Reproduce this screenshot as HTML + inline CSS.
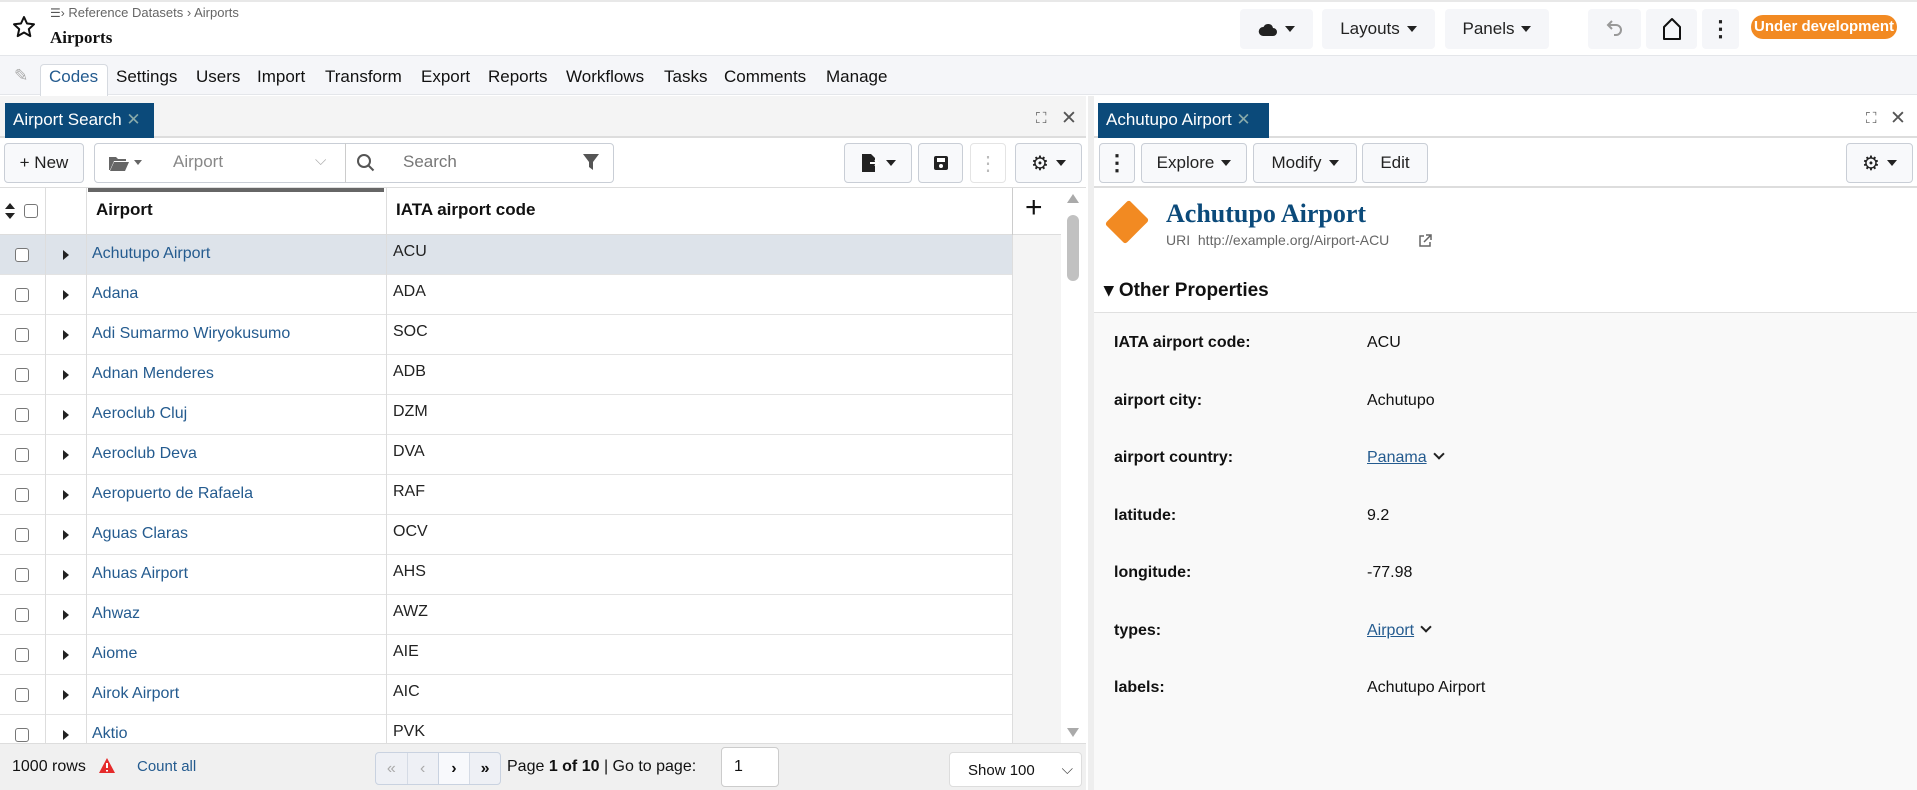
<!DOCTYPE html>
<html><head><meta charset="utf-8"><style>
*{box-sizing:border-box;margin:0;padding:0}
body{width:1917px;height:790px;overflow:hidden;background:#fff;font-family:"Liberation Sans",sans-serif;color:#111;position:relative}
.a{position:absolute}
.btn{position:absolute;background:#f5f6f9;border-radius:4px;display:flex;align-items:center;justify-content:center;font-size:17px;color:#222}
.tb{position:absolute;border:1px solid #c9ced6;border-radius:4px;background:#f8f9fb;display:flex;align-items:center;justify-content:center;font-size:17px;color:#222}
.caret{display:inline-block;width:0;height:0;border-left:5px solid transparent;border-right:5px solid transparent;border-top:6px solid #222;margin-left:7px}
.row{position:absolute;left:0;width:1061px;height:40px;border-bottom:1px solid #e3e3e3;font-size:16px}
.row .cb{position:absolute;left:15px;top:13px;width:14px;height:14px;border:1px solid #777;border-radius:3px;background:#fff}
.row .tri{position:absolute;left:63px;top:15px;width:0;height:0;border-top:5px solid transparent;border-bottom:5px solid transparent;border-left:6px solid #222}
.row .n{position:absolute;left:92px;top:10px;color:#245b8f}
.row .c{position:absolute;left:393px;top:8px;color:#222}
.row .v{position:absolute;left:45px;top:0;height:40px;border-left:1px solid #ddd}
.row .v2{position:absolute;left:86px;top:0;height:40px;border-left:1px solid #ddd}
.row .v3{position:absolute;left:386px;top:0;height:40px;border-left:1px solid #ddd}
.row .v4{position:absolute;left:1012px;top:0;height:40px;width:49px;border-left:1px solid #ddd;background:#f4f4f4}
.pl{position:absolute;left:1114px;font-size:16px;font-weight:bold;color:#111}
.pv{position:absolute;left:1367px;font-size:16px;color:#111}
.lk{color:#245b8f;text-decoration:underline}
.chev{display:inline-block;width:8px;height:8px;border-right:2px solid #222;border-bottom:2px solid #222;transform:rotate(45deg);margin-left:8px;position:relative;top:-4px}
</style></head><body>
<div class="a" style="left:0;top:0;width:1917px;height:2px;background:#e8e8e8"></div>
<svg class="a" style="left:12px;top:15px" width="24" height="24" viewBox="0 0 24 24"><path d="M12 2l3 6.5 7 .8-5.2 4.8 1.5 7-6.3-3.6-6.3 3.6 1.5-7L2 9.3l7-.8z" fill="none" stroke="#111" stroke-width="2" stroke-linejoin="round"/></svg>
<div class="a" style="left:50px;top:5px;font-size:13px;color:#666"><span style="font-size:12px;color:#555">☰›</span> Reference Datasets › Airports</div>
<div class="a" style="left:50px;top:28px;font-size:17px;font-weight:bold;font-family:'Liberation Serif',serif;color:#111">Airports</div>
<div class="btn" style="left:1240px;top:9px;width:73px;height:40px"><svg width="20" height="16" viewBox="0 0 20 16"><path d="M5 15h10a4 4 0 0 0 0-8 5 5 0 0 0-9.5-1A4.5 4.5 0 0 0 5 15z" fill="#222"/></svg><span class="caret"></span></div>
<div class="btn" style="left:1322px;top:9px;width:113px;height:40px">Layouts<span class="caret"></span></div>
<div class="btn" style="left:1445px;top:9px;width:104px;height:40px">Panels<span class="caret"></span></div>
<div class="btn" style="left:1588px;top:9px;width:53px;height:40px"><svg width="20" height="22" viewBox="0 0 20 22"><path d="M7 3L3 7l4 4M3 7h8a5 5 0 0 1 0 10H9" fill="none" stroke="#999" stroke-width="2"/></svg></div>
<div class="btn" style="left:1646px;top:9px;width:51px;height:40px"><svg width="22" height="24" viewBox="0 0 22 24"><path d="M3 22V10l8-8 8 8v12z" fill="none" stroke="#111" stroke-width="2" stroke-linejoin="round"/></svg></div>
<div class="btn" style="left:1702px;top:9px;width:37px;height:40px;font-size:22px;font-weight:bold">⋮</div>
<div class="a" style="left:1751px;top:15px;width:146px;height:24px;background:#f28a22;border-radius:12px;color:#fff;font-weight:bold;font-size:15px;text-align:center;line-height:24px">Under development</div>
<div class="a" style="left:0;top:55px;width:1917px;height:40px;background:#f5f6f9;border-top:1px solid #e4e6ea;border-bottom:1px solid #e4e6ea"></div>
<div class="a" style="left:14px;top:66px;font-size:17px;color:#aaa">✎</div>
<div class="a" style="left:40px;top:64px;width:68px;height:32px;background:#fff;border:1px solid #d6dae0;border-bottom:none;border-radius:4px 4px 0 0"></div>
<div class="a" style="left:49px;top:67px;font-size:17px;color:#245b8f">Codes</div>
<div class="a" style="left:116px;top:67px;font-size:17px;word-spacing:0">
<span style="position:absolute;left:0">Settings</span><span style="position:absolute;left:80px">Users</span><span style="position:absolute;left:141px">Import</span><span style="position:absolute;left:209px">Transform</span><span style="position:absolute;left:305px">Export</span><span style="position:absolute;left:372px">Reports</span><span style="position:absolute;left:450px">Workflows</span><span style="position:absolute;left:548px">Tasks</span><span style="position:absolute;left:608px">Comments</span><span style="position:absolute;left:710px">Manage</span></div>
<div class="a" style="left:0;top:96px;width:1086px;height:42px;background:#f4f4f4;border-bottom:2px solid #ddd"></div>
<div class="a" style="left:5px;top:103px;width:149px;height:35px;background:#0b4a7a;color:#fff;font-size:17px;line-height:34px;padding-left:8px">Airport Search <span style="color:#8aa">✕</span></div>
<div class="a" style="left:1036px;top:110px;font-size:15px;color:#555">⛶</div>
<div class="a" style="left:1061px;top:107px;font-size:19px;color:#555">✕</div>
<div class="a" style="left:1088px;top:96px;width:6px;height:694px;background:#eee"></div>
<div class="a" style="left:0;top:138px;width:1086px;height:50px;background:#fff;border-bottom:1px solid #ddd"></div>
<div class="tb" style="left:4px;top:143px;width:80px;height:40px">+ New</div>
<div class="tb" style="left:94px;top:143px;width:520px;height:40px;background:#fff;justify-content:flex-start"></div>
<svg class="a" style="left:108px;top:154px" width="36" height="18" viewBox="0 0 36 18"><path d="M1 3h7l2 2h8v2H6l-4 9H1z M6 8h15l-4 9H2z" fill="#666"/><path d="M26 6h8l-4 5z" fill="#666"/></svg>
<div class="a" style="left:173px;top:152px;font-size:17px;color:#888">Airport</div>
<div class="a" style="left:315px;top:152px;font-size:15px;color:#aaa">⌵</div>
<div class="a" style="left:345px;top:143px;height:40px;border-left:1px solid #ccc"></div>
<svg class="a" style="left:356px;top:153px" width="20" height="20" viewBox="0 0 20 20"><circle cx="8" cy="8" r="6" fill="none" stroke="#555" stroke-width="2"/><path d="M12.5 12.5l5 5" stroke="#555" stroke-width="2"/></svg>
<div class="a" style="left:403px;top:152px;font-size:17px;color:#777">Search</div>
<svg class="a" style="left:582px;top:153px" width="18" height="18" viewBox="0 0 18 18"><path d="M1 1h16l-6 8v8l-4-3V9z" fill="#555"/></svg>
<div class="tb" style="left:844px;top:143px;width:68px;height:40px"><svg width="18" height="20" viewBox="0 0 18 20"><path d="M1 1h9l4 4v14H1z" fill="#222"/><path d="M9 10h8M14 7l3 3-3 3" stroke="#fff" stroke-width="2" fill="none"/></svg><span class="caret"></span></div>
<div class="tb" style="left:918px;top:143px;width:45px;height:40px"><svg width="16" height="16" viewBox="0 0 16 16"><rect x="1" y="1" width="14" height="14" rx="2" fill="#222"/><rect x="4" y="3" width="8" height="4" fill="#fff"/><circle cx="8" cy="11" r="2" fill="#fff"/></svg></div>
<div class="tb" style="left:970px;top:143px;width:36px;height:40px;color:#bbb;border-color:#e4e4e4;background:#fff;font-size:20px">⋮</div>
<div class="tb" style="left:1015px;top:143px;width:67px;height:40px;font-size:20px">⚙<span class="caret"></span></div>
<div class="a" style="left:0;top:188px;width:1061px;height:47px;border-bottom:1px solid #ddd;background:#fff"></div>
<div class="a" style="left:88px;top:188px;width:296px;height:4px;background:#666"></div>
<svg class="a" style="left:5px;top:203px" width="10" height="16" viewBox="0 0 10 16"><path d="M5 0l5 6H0z M5 16l5-6H0z" fill="#222"/></svg>
<div class="a" style="left:24px;top:204px;width:14px;height:14px;border:1px solid #777;border-radius:3px"></div>
<div class="a" style="left:45px;top:188px;height:47px;border-left:1px solid #ddd"></div>
<div class="a" style="left:86px;top:188px;height:47px;border-left:1px solid #ddd"></div>
<div class="a" style="left:386px;top:188px;height:47px;border-left:1px solid #ddd"></div>
<div class="a" style="left:1012px;top:188px;height:47px;border-left:1px solid #ccc"></div>
<div class="a" style="left:96px;top:200px;font-size:17px;font-weight:bold">Airport</div>
<div class="a" style="left:396px;top:200px;font-size:17px;font-weight:bold">IATA airport code</div>
<div class="a" style="left:1025px;top:191px;font-size:30px;font-weight:300">+</div>
<div class="row" style="top:235px;background:#dde3ea"><div class="v"></div><div class="v2"></div><div class="v3"></div><div class="v4"></div><div class="cb"></div><div class="tri"></div><div class="n">Achutupo Airport</div><div class="c">ACU</div></div>
<div class="row" style="top:275px"><div class="v"></div><div class="v2"></div><div class="v3"></div><div class="v4"></div><div class="cb"></div><div class="tri"></div><div class="n">Adana</div><div class="c">ADA</div></div>
<div class="row" style="top:315px"><div class="v"></div><div class="v2"></div><div class="v3"></div><div class="v4"></div><div class="cb"></div><div class="tri"></div><div class="n">Adi Sumarmo Wiryokusumo</div><div class="c">SOC</div></div>
<div class="row" style="top:355px"><div class="v"></div><div class="v2"></div><div class="v3"></div><div class="v4"></div><div class="cb"></div><div class="tri"></div><div class="n">Adnan Menderes</div><div class="c">ADB</div></div>
<div class="row" style="top:395px"><div class="v"></div><div class="v2"></div><div class="v3"></div><div class="v4"></div><div class="cb"></div><div class="tri"></div><div class="n">Aeroclub Cluj</div><div class="c">DZM</div></div>
<div class="row" style="top:435px"><div class="v"></div><div class="v2"></div><div class="v3"></div><div class="v4"></div><div class="cb"></div><div class="tri"></div><div class="n">Aeroclub Deva</div><div class="c">DVA</div></div>
<div class="row" style="top:475px"><div class="v"></div><div class="v2"></div><div class="v3"></div><div class="v4"></div><div class="cb"></div><div class="tri"></div><div class="n">Aeropuerto de Rafaela</div><div class="c">RAF</div></div>
<div class="row" style="top:515px"><div class="v"></div><div class="v2"></div><div class="v3"></div><div class="v4"></div><div class="cb"></div><div class="tri"></div><div class="n">Aguas Claras</div><div class="c">OCV</div></div>
<div class="row" style="top:555px"><div class="v"></div><div class="v2"></div><div class="v3"></div><div class="v4"></div><div class="cb"></div><div class="tri"></div><div class="n">Ahuas Airport</div><div class="c">AHS</div></div>
<div class="row" style="top:595px"><div class="v"></div><div class="v2"></div><div class="v3"></div><div class="v4"></div><div class="cb"></div><div class="tri"></div><div class="n">Ahwaz</div><div class="c">AWZ</div></div>
<div class="row" style="top:635px"><div class="v"></div><div class="v2"></div><div class="v3"></div><div class="v4"></div><div class="cb"></div><div class="tri"></div><div class="n">Aiome</div><div class="c">AIE</div></div>
<div class="row" style="top:675px"><div class="v"></div><div class="v2"></div><div class="v3"></div><div class="v4"></div><div class="cb"></div><div class="tri"></div><div class="n">Airok Airport</div><div class="c">AIC</div></div>
<div class="row" style="top:715px"><div class="v"></div><div class="v2"></div><div class="v3"></div><div class="v4"></div><div class="cb"></div><div class="tri"></div><div class="n">Aktio</div><div class="c">PVK</div></div>
<div class="a" style="left:1061px;top:188px;width:25px;height:555px;background:#fff"></div>
<div class="a" style="left:1067px;top:194px;width:0;height:0;border-left:6px solid transparent;border-right:6px solid transparent;border-bottom:9px solid #aaa"></div>
<div class="a" style="left:1067px;top:215px;width:12px;height:66px;background:#c1c1c1;border-radius:6px"></div>
<div class="a" style="left:1067px;top:728px;width:0;height:0;border-left:6px solid transparent;border-right:6px solid transparent;border-top:9px solid #aaa"></div>
<div class="a" style="left:0;top:743px;width:1086px;height:47px;background:#f0f0f0;border-top:1px solid #ddd"></div>
<div class="a" style="left:12px;top:758px;font-size:16px">1000 rows</div>
<svg class="a" style="left:98px;top:757px" width="18" height="17" viewBox="0 0 18 17"><path d="M9 1l8 15H1z" fill="#e52b2b"/><path d="M9 6v5M9 13v1.5" stroke="#fff" stroke-width="2"/></svg>
<div class="a" style="left:137px;top:758px;font-size:15px;color:#245b8f">Count all</div>
<div class="a" style="left:375px;top:752px;width:126px;height:33px;border:1px solid #c9d2e0;border-radius:4px;background:#eef0f5;display:flex">
<div style="width:31px;text-align:center;line-height:31px;color:#aaa">«</div><div style="width:31px;text-align:center;line-height:31px;color:#aaa;border-left:1px solid #d5dbe5">‹</div><div style="width:32px;text-align:center;line-height:31px;background:#f8f9fc;border-left:1px solid #c9d2e0;font-weight:bold">›</div><div style="width:31px;text-align:center;line-height:31px;border-left:1px solid #d5dbe5;font-weight:bold">»</div></div>
<div class="a" style="left:507px;top:758px;font-size:16px">Page <b>1 of 10</b> | Go to page:</div>
<div class="a" style="left:721px;top:747px;width:58px;height:40px;background:#fff;border:1px solid #ccc;border-radius:4px;font-size:16px;padding:10px 0 0 12px">1</div>
<div class="a" style="left:949px;top:752px;width:133px;height:35px;background:#fff;border:1px solid #ddd;border-radius:4px;font-size:15px;padding:9px 0 0 18px">Show 100<span style="position:absolute;right:8px;top:8px;color:#444">⌵</span></div>
<div class="a" style="left:1094px;top:96px;width:823px;height:42px;background:#fff;border-bottom:2px solid #ddd"></div>
<div class="a" style="left:1098px;top:103px;width:171px;height:35px;background:#0b4a7a;color:#fff;font-size:17px;line-height:34px;padding-left:8px">Achutupo Airport <span style="color:#8aa">✕</span></div>
<div class="a" style="left:1866px;top:110px;font-size:15px;color:#555">⛶</div>
<div class="a" style="left:1890px;top:107px;font-size:19px;color:#555">✕</div>
<div class="a" style="left:1094px;top:138px;width:823px;height:50px;border-bottom:2px solid #ddd"></div>
<div class="tb" style="left:1099px;top:143px;width:36px;height:40px;font-size:22px;font-weight:bold">⋮</div>
<div class="tb" style="left:1141px;top:143px;width:106px;height:40px">Explore<span class="caret"></span></div>
<div class="tb" style="left:1253px;top:143px;width:104px;height:40px">Modify<span class="caret"></span></div>
<div class="tb" style="left:1362px;top:143px;width:66px;height:40px">Edit</div>
<div class="tb" style="left:1846px;top:143px;width:67px;height:40px;font-size:20px">⚙<span class="caret"></span></div>
<div class="a" style="left:1110px;top:205px;width:34px;height:34px;background:#f28a22;transform:rotate(45deg) scaleX(0.85);border-radius:3px"></div>
<div class="a" style="left:1166px;top:199px;font-size:26px;font-weight:bold;font-family:'Liberation Serif',serif;color:#0b4a7a">Achutupo Airport</div>
<div class="a" style="left:1166px;top:232px;font-size:14px;color:#666">URI&nbsp; http://example.org/Airport-ACU</div>
<svg class="a" style="left:1418px;top:234px" width="14" height="14" viewBox="0 0 14 14"><path d="M6 2H2v10h10V8" fill="none" stroke="#666" stroke-width="1.5"/><path d="M8 1h5v5M13 1L6 8" fill="none" stroke="#666" stroke-width="1.5"/></svg>
<div class="a" style="left:1104px;top:279px;font-size:19px;font-weight:bold">▾ Other Properties</div>
<div class="a" style="left:1094px;top:312px;width:823px;height:478px;background:#f9f9f9;border-top:1px solid #e0e0e0"></div>
<div class="pl" style="top:334px">IATA airport code:</div><div class="pv" style="top:334px">ACU</div>
<div class="pl" style="top:392px">airport city:</div><div class="pv" style="top:392px">Achutupo</div>
<div class="pl" style="top:449px">airport country:</div><div class="pv" style="top:449px"><span class="lk">Panama</span><span class="chev"></span></div>
<div class="pl" style="top:507px">latitude:</div><div class="pv" style="top:507px">9.2</div>
<div class="pl" style="top:564px">longitude:</div><div class="pv" style="top:564px">-77.98</div>
<div class="pl" style="top:622px">types:</div><div class="pv" style="top:622px"><span class="lk">Airport</span><span class="chev"></span></div>
<div class="pl" style="top:679px">labels:</div><div class="pv" style="top:679px">Achutupo Airport</div>
</body></html>
